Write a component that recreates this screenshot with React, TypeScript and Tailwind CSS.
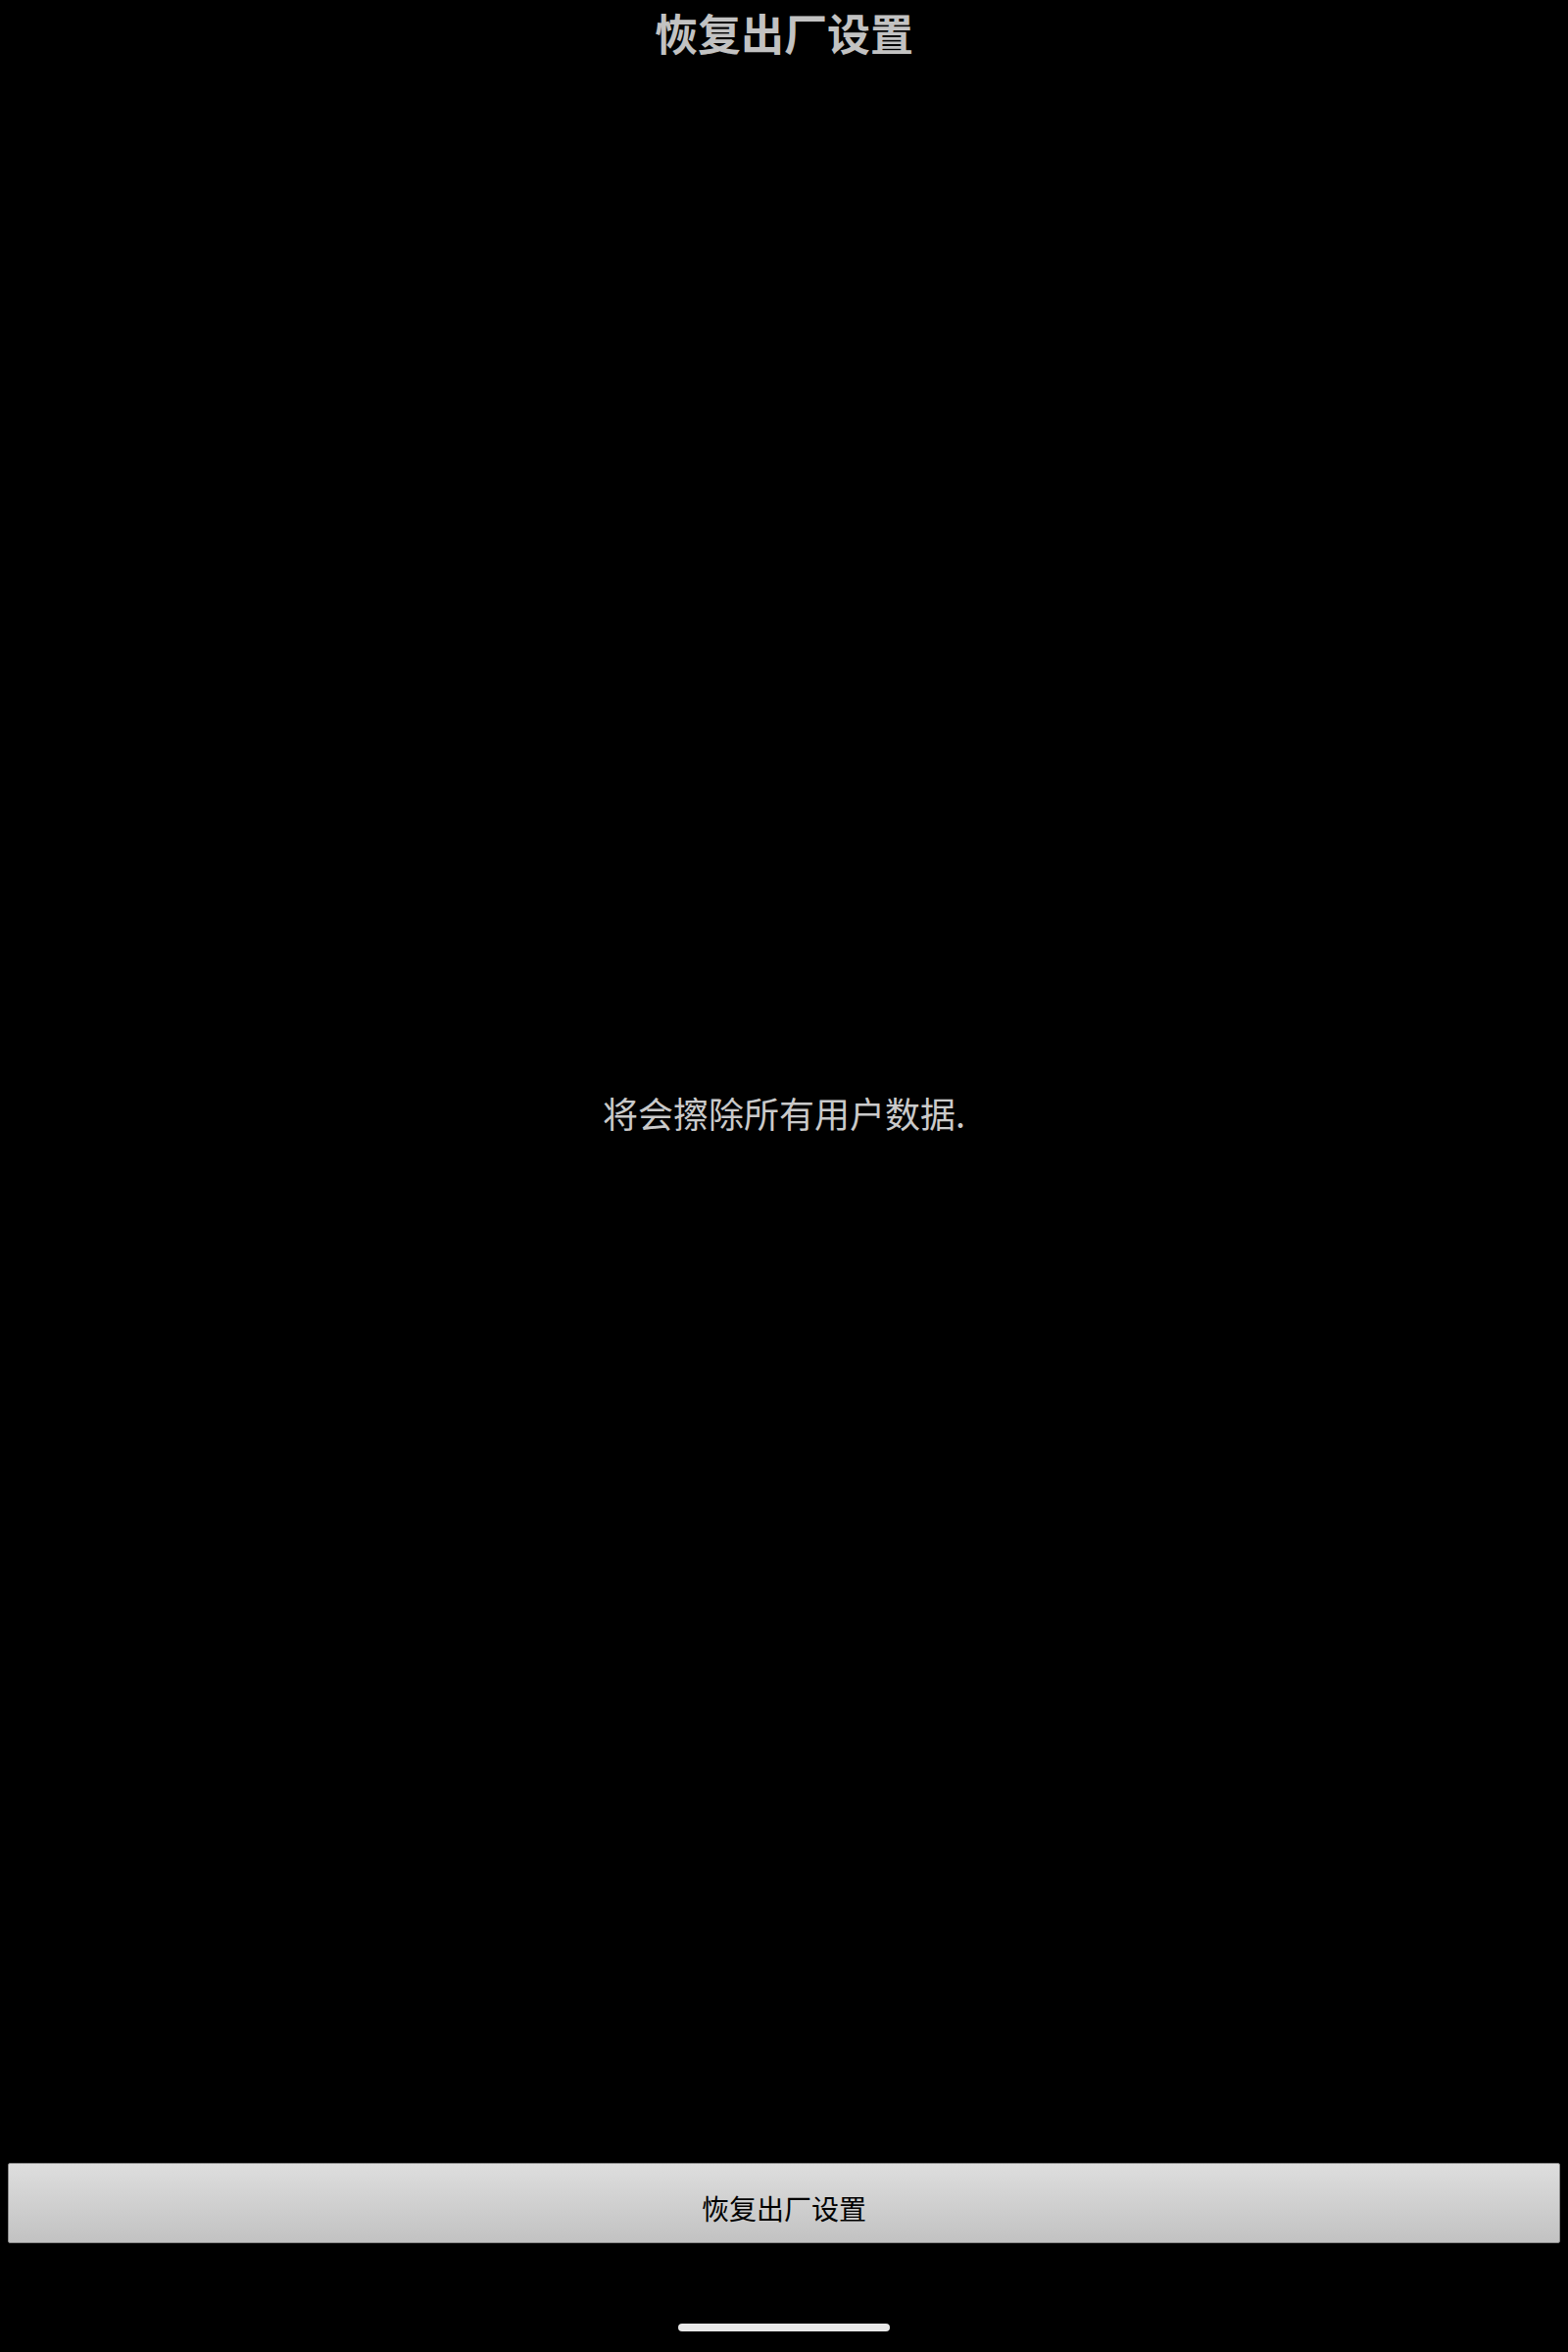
export default function App() {
  return (
    <div
      className="flex h-[2400px] w-[1600px] flex-col bg-black"
      style={{ fontFamily: '"Noto Sans CJK SC", "Noto Sans", sans-serif' }}
    >
      <div className="flex h-[66px] items-center justify-center">
        <h1 className="text-[44px] font-bold leading-none text-[#c2c2c2]">恢复出厂设置</h1>
      </div>

      <div className="flex flex-1 items-center justify-center pb-[4px]">
        <p className="text-[36px] leading-none text-[#cacaca]">将会擦除所有用户数据.</p>
      </div>

      <button className="mx-2 flex h-[82px] items-center justify-center rounded-[2px] border border-[#8a8a8a] bg-gradient-to-b from-[#dedede] to-[#c2c2c2] pt-[10px] text-[28px] leading-none text-black">
        恢复出厂设置
      </button>

      <div className="flex h-[111px] items-end justify-center pb-[21px]">
        <div className="h-[8px] w-[216px] rounded-full bg-[#e8e8e8]" />
      </div>
    </div>
  );
}
